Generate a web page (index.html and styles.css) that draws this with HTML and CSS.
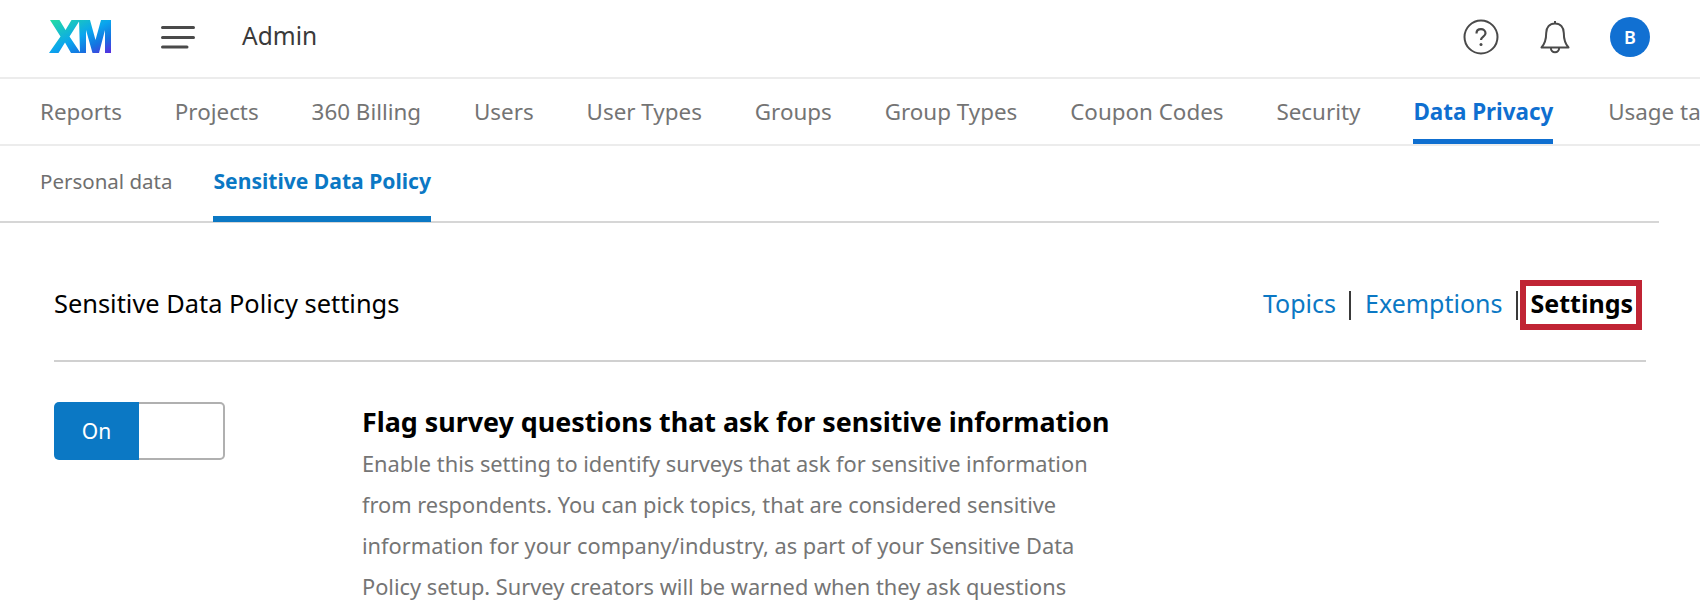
FILE: index.html
```html
<!DOCTYPE html>
<html lang="en">
<head>
<meta charset="utf-8">
<title>Admin</title>
<link rel="stylesheet" href="styles.css">
</head>
<body>
<header class="topbar">
  <div class="brand">
    <svg class="logo" width="62" height="33" viewBox="0 0 62 33" aria-label="XM">
      <defs>
        <linearGradient id="xm" x1="0" y1="0" x2="1" y2="1">
          <stop offset="0" stop-color="#25dea0"/>
          <stop offset="0.5" stop-color="#0aa5ee"/>
          <stop offset="0.75" stop-color="#1573e0"/>
          <stop offset="1" stop-color="#5a2ae0"/>
        </linearGradient>
      </defs>
      <path fill="url(#xm)" d="M1 0H10.500L16.500 10L22.500 0H31L20.500 16.500L31.500 33H22L16 22.500L9.500 33H0L11.500 16.500ZM30 0H41L46.500 20L52 0H62V33H56V10L50 33H43.500L37 10V33H31Z"/>
    </svg>
    <svg class="menu" width="34" height="24" viewBox="0 0 34 24">
      <path d="M1.500 2.500h31M1.500 12.500h31M1.500 22h24.500" stroke="#4a4a4a" stroke-width="3" stroke-linecap="round" fill="none"/>
    </svg>
    <span class="app-title">Admin</span>
  </div>
  <div class="actions">
    <svg class="help" width="36" height="36" viewBox="0 0 36 36">
      <circle cx="18" cy="18" r="16.500" stroke="#4a4a4a" stroke-width="2" fill="none"/>
      <path d="M13.500 14.500c0-2.700 2-4.300 4.500-4.300s4.500 1.600 4.500 4c0 3.300-4.500 3.400-4.500 6.800" stroke="#4a4a4a" stroke-width="2.200" fill="none"/>
      <circle cx="18" cy="25.500" r="1.500" fill="#4a4a4a"/>
    </svg>
    <svg class="bell" width="30" height="36" viewBox="0 0 30 36">
      <path d="M15 2v2.500M15 4.500c-5.500 0-8.800 4-8.800 9.500 0 7-2 11.500-4.700 14.500h27c-2.700-3-4.700-7.500-4.700-14.500 0-5.500-3.300-9.500-8.800-9.500zM10.800 28.500c0 3 1.900 4.800 4.200 4.800s4.200-1.800 4.200-4.800" stroke="#4a4a4a" stroke-width="2" stroke-linejoin="round" fill="none"/>
    </svg>
    <span class="avatar">B</span>
  </div>
</header>

<nav class="tabs">
  <a class="tab">Reports</a>
  <a class="tab">Projects</a>
  <a class="tab">360 Billing</a>
  <a class="tab">Users</a>
  <a class="tab">User Types</a>
  <a class="tab">Groups</a>
  <a class="tab">Group Types</a>
  <a class="tab">Coupon Codes</a>
  <a class="tab">Security</a>
  <a class="tab tab-active">Data Privacy</a>
  <a class="tab">Usage ta</a>
</nav>

<nav class="subtabs">
  <a class="subtab">Personal data</a>
  <a class="subtab subtab-active">Sensitive Data Policy</a>
</nav>

<main class="content">
  <div class="section-head">
    <h1 class="section-title">Sensitive Data Policy settings</h1>
    <div class="links">
      <a class="link">Topics</a>
      <span class="sep"></span>
      <a class="link">Exemptions</a>
      <span class="sep sep-tight"></span>
      <a class="link-current">Settings</a>
    </div>
  </div>
  <div class="setting">
    <div class="toggle"><span class="toggle-on">On</span><span class="toggle-off"></span></div>
    <div class="setting-text">
      <h2 class="setting-title">Flag survey questions that ask for sensitive information</h2>
      <p class="setting-desc">Enable this setting to identify surveys that ask for sensitive information from respondents. You can pick topics, that are considered sensitive information for your company/industry, as part of your Sensitive Data Policy setup. Survey creators will be warned when they ask questions</p>
    </div>
  </div>
</main>
</body>
</html>
```
FILE: styles.css
```css
* { box-sizing: border-box; }
html, body { margin: 0; height: 600px; overflow: hidden; background: #fff; }
body { font-family: "Noto Sans", "Open Sans", sans-serif; color: #000; }

.topbar {
  height: 79px;
  display: flex;
  align-items: center;
  justify-content: space-between;
  padding: 0 50px 4px 49px;
  border-bottom: 2px solid #ececec;
}
.brand { display: flex; align-items: center; }
.logo { margin-right: 50px; }
.menu { margin-right: 47px; }
.app-title { font-size: 24.500px; color: #3a3a3a; line-height: 34px; margin-top: -2px; }
.actions { display: flex; align-items: center; }
.help { margin-right: 41px; }
.bell { margin-right: 40px; }
.avatar {
  width: 40px; height: 40px; border-radius: 50%;
  background: #1170d2; color: #fff;
  display: flex; align-items: center; justify-content: center;
  font-size: 18px; font-weight: 600;
}

.tabs {
  height: 67px;
  display: flex;
  gap: 52.900px;
  padding-left: 40px;
  border-bottom: 2px solid #ececec;
  overflow: hidden;
  white-space: nowrap;
}
.tab {
  font-size: 22.400px;
  line-height: 66px;
  color: #747474;
  flex: none;
  height: 65px;
}
.tab-active {
  color: #0f6fd0;
  font-weight: 700;
  border-bottom: 5px solid #0f6fd0;
  margin-right: 2px;
}

.subtabs {
  height: 77px;
  display: flex;
  gap: 41px;
  padding-left: 40px;
  border-bottom: 2px solid #d6d6d6;
  margin-right: 41px;
}
.subtab { font-size: 20.500px; line-height: 70px; color: #6f6f6f; height: 76px; }
.subtab-active {
  font-size: 21.100px;
  color: #0b78c4;
  font-weight: 700;
  border-bottom: 6px solid #0b78c4;
}

.content { padding: 0 54px; }
.section-head {
  height: 139px;
  padding-top: 27px;
  display: flex;
  align-items: center;
  justify-content: space-between;
  border-bottom: 2px solid #d0d0d0;
}
.section-title { margin: -4px 0 0; font-size: 25.400px; font-weight: 400; line-height: 36px; }
.links { display: flex; align-items: center; margin-right: 4px; }
.link { font-size: 25px; line-height: 36px; color: #0b78c4; margin-top: -4px; }
.sep { width: 2px; height: 29px; margin: 0 14px 0 13px; background: #3a3a3a; }
.sep-tight { margin: 0 2px 0 13px; }
.link-current {
  font-size: 25px; font-weight: 700;
  border: 6px solid #c02434;
  padding: 0 3px 0 5px;
  height: 50px;
  line-height: 34px;
}

.setting { display: flex; padding-top: 40px; }
.toggle {
  width: 171px; height: 58px; flex: none;
  display: flex;
  margin-right: 137px;
}
.toggle-on {
  width: 85px;
  background: #0b78c4; color: #fff;
  font-size: 21px;
  border-radius: 5px 0 0 5px;
  display: flex; align-items: center; justify-content: center;
}
.toggle-off {
  flex: 1;
  border: 2px solid #b0b0b0;
  border-left: none;
  border-radius: 0 5px 5px 0;
}
.setting-text { width: 760px; }
.setting-title { margin: 0 0 2px; font-size: 26.850px; font-weight: 700; line-height: 39px; }
.setting-desc { margin: 0; font-size: 21.800px; line-height: 41px; color: #757575; }
```
